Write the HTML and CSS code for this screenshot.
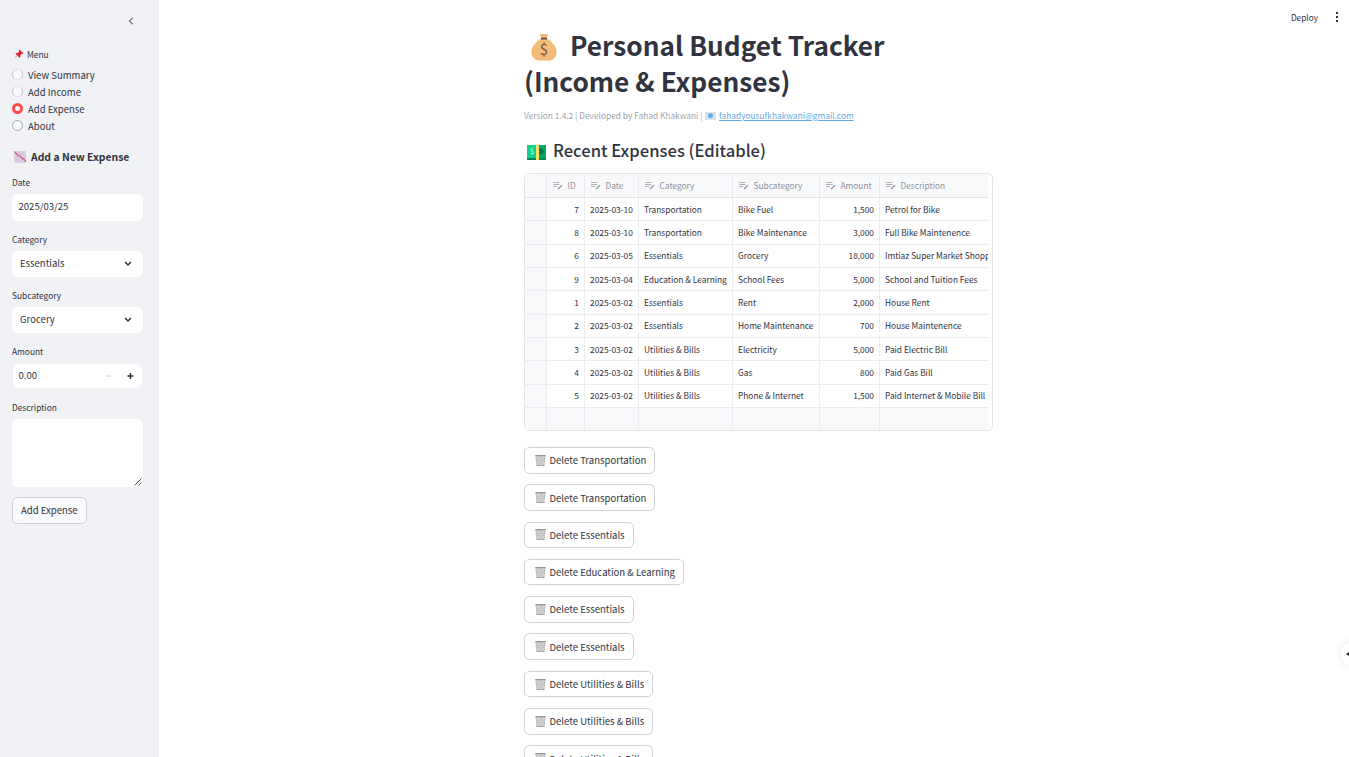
FILE: index.html
```html
<!DOCTYPE html>
<html lang="en">
<head>
<meta charset="utf-8">
<title>Personal Budget Tracker</title>
<link rel="stylesheet" href="styles.css">
</head>
<body>
<svg class="defs" aria-hidden="true">
  <symbol id="edit" viewBox="0 0 10 9"><path d="M0 1.500h6.500M0 3.500h6.500M0 5.500h4" stroke="#b0b2b8" stroke-width="1" fill="none"/><path d="M5 8 9 4.200" stroke="#999ba2" stroke-width="1.400" fill="none"/></symbol>
  <symbol id="bin" viewBox="0 0 11 11"><path d="M.7 1.500h9.600L9.400 10.800H1.600z" fill="#d2d2d2"/><path d="m1 3 7 7M4 2l5 5M10 3l-7 7M7 2 2 7M1 2l.9 8.500M10 2l-.9 8.500" stroke="#adadad" stroke-width=".5"/><path d="M.3 0h10.400v1.500H.3z" fill="#929594"/><path d="M1.600 10h7.800v1H1.600z" fill="#a4a6a5"/></symbol>
  <symbol id="down" viewBox="0 0 8 6"><path d="m1 1 3 3 3-3" fill="none" stroke="#31333f" stroke-width="1.500"/></symbol>
</svg>
<div class="app">
  <aside class="sidebar">
    <div class="collapse"><svg width="6" height="8" viewBox="0 0 6 8"><path d="M4.800.7 1.400 4l3.400 3.300" fill="none" stroke="#777986" stroke-width="1.200"/></svg></div>
    <div class="label menu"><svg width="10" height="10" viewBox="0 0 10 10"><path d="M3.300 6.300.6 9.200" stroke="#999" stroke-width=".7"/><path d="m5.400.4 4 3.800-.8.7-.7-.1-1.600 1.600.1 1.700-.8.7L1.400 4.800l.8-.8 1.500.1 1.500-1.500-.3-1.500z" fill="#e52233"/></svg><span>Menu</span></div>
    <div class="radios">
      <div class="radio"><i class="dot dim"></i><span>View Summary</span></div>
      <div class="radio"><i class="dot dim"></i><span>Add Income</span></div>
      <div class="radio"><i class="dot on"></i><span>Add Expense</span></div>
      <div class="radio"><i class="dot"></i><span>About</span></div>
    </div>
    <h3 class="subhead"><svg width="12" height="12" viewBox="0 0 12 12"><path d="M0 0h12v12H0z" fill="#ded4e8"/><path d="M3 0v12M6 0v12M9 0v12M0 3h12M0 6h12M0 9h12" stroke="#c9bdd8" stroke-width=".6"/><path d="m.3.5 4 4.200 2 .2 2 3 1.100-.5L12 11" fill="none" stroke="#df477c" stroke-width="1.100"/></svg><span>Add a New Expense</span></h3>
    <div class="field date"><div class="label">Date</div><div class="box"><span>2025/03/25</span></div></div>
    <div class="field"><div class="label">Category</div><div class="box select"><span>Essentials</span><svg width="8" height="6"><use href="#down"/></svg></div></div>
    <div class="field"><div class="label">Subcategory</div><div class="box select"><span>Grocery</span><svg width="8" height="6"><use href="#down"/></svg></div></div>
    <div class="field"><div class="label">Amount</div><div class="box number"><span>0.00</span><svg width="28" height="8" viewBox="0 0 28 8"><path d="M0 4h5.500" stroke="#cfd0d8" stroke-width="1"/><path d="M21.500 4h6M24.500 1v6" stroke="#31333f" stroke-width="1.400"/></svg></div></div>
    <div class="field"><div class="label">Description</div><div class="box area"><svg width="8" height="8" viewBox="0 0 8 8"><path d="m.5 7.500 7-7M4.500 7.500l3-3" stroke="#444" stroke-width=".9"/></svg></div></div>
    <div class="btn add"><span>Add Expense</span></div>
  </aside>
  <main class="main">
    <header class="toolbar"><span>Deploy</span><svg width="4" height="10" viewBox="0 0 4 10"><path d="M1 0h2v2H1zM1 4h2v2H1zM1 8h2v2H1z" fill="#31333f"/></svg></header>
    <div class="content">
      <h1 class="title"><svg width="26" height="27" viewBox="0 0 26 27"><path d="M8.500 0h9l-1.600 3.600h-5.800z" fill="#f2bd78"/><path d="M9.500 5C4 8.500.5 13 .5 18c0 5.500 3.500 8.500 7.500 8.500h10c4 0 7.500-3 7.500-8.500 0-5-3.500-9.500-9-13z" fill="#f2bd78"/><path d="M10 3.500h6v2h-6z" fill="#7b4a3a"/><text x="13" y="20.800" class="dollar">$</text></svg><span>Personal Budget Tracker</span><br><span>(Income &amp; Expenses)</span></h1>
      <div class="caption"><span>Version 1.4.2 | Developed by Fahad Khakwani |</span><svg width="11" height="8" viewBox="0 0 11 8"><path d="M0 0h11v8H0z" fill="#e3e4ec"/><path d="m0 0 5.500 4L11 0M0 8l4-4M11 8 7 4" stroke="#c4c9d8" fill="none" stroke-width=".6"/><circle cx="5.500" cy="3.700" r="2.600" fill="#70b9e8"/><circle cx="5.500" cy="3.700" r=".9" fill="#388fc8"/></svg><a class="mail">fahadyousufkhakwani@gmail.com</a></div>
      <h2 class="recent"><svg width="19" height="15" viewBox="0 0 19 15"><path d="M0 0h19v13l-1 2H1l-1-2z" fill="#00ad64"/><path d="M0 0h19v13H0z" fill="#0bd489"/><path d="M12 0h7v13h-7z" fill="#00a96a"/><circle cx="13.500" cy="6.500" r="3.300" fill="#07774c"/><path d="M0 13h19v2H0z" fill="#008b54"/><path d="M9 0h3v15H9z" fill="#ffe066"/><text x="5" y="9.300" class="cash">$</text></svg><span>Recent Expenses (Editable)</span></h2>
      <div class="table">
        <div class="row head"><div></div><div><svg><use href="#edit"/></svg><span>ID</span></div><div><svg><use href="#edit"/></svg><span>Date</span></div><div><svg><use href="#edit"/></svg><span>Category</span></div><div><svg><use href="#edit"/></svg><span>Subcategory</span></div><div><svg><use href="#edit"/></svg><span>Amount</span></div><div><svg><use href="#edit"/></svg><span>Description</span></div></div>
        <div class="row"><div></div><div>7</div><div>2025-03-10</div><div>Transportation</div><div>Bike Fuel</div><div>1,500</div><div>Petrol for Bike</div></div>
        <div class="row"><div></div><div>8</div><div>2025-03-10</div><div>Transportation</div><div>Bike Maintenance</div><div>3,000</div><div>Full Bike Maintenence</div></div>
        <div class="row"><div></div><div>6</div><div>2025-03-05</div><div>Essentials</div><div>Grocery</div><div>18,000</div><div>Imtiaz Super Market Shopp</div></div>
        <div class="row"><div></div><div>9</div><div>2025-03-04</div><div>Education &amp; Learning</div><div>School Fees</div><div>5,000</div><div>School and Tuition Fees</div></div>
        <div class="row"><div></div><div>1</div><div>2025-03-02</div><div>Essentials</div><div>Rent</div><div>2,000</div><div>House Rent</div></div>
        <div class="row"><div></div><div>2</div><div>2025-03-02</div><div>Essentials</div><div>Home Maintenance</div><div>700</div><div>House Maintenence</div></div>
        <div class="row"><div></div><div>3</div><div>2025-03-02</div><div>Utilities &amp; Bills</div><div>Electricity</div><div>5,000</div><div>Paid Electric Bill</div></div>
        <div class="row"><div></div><div>4</div><div>2025-03-02</div><div>Utilities &amp; Bills</div><div>Gas</div><div>800</div><div>Paid Gas Bill</div></div>
        <div class="row"><div></div><div>5</div><div>2025-03-02</div><div>Utilities &amp; Bills</div><div>Phone &amp; Internet</div><div>1,500</div><div>Paid Internet &amp; Mobile Bill</div></div>
        <div class="row blank"><div></div><div></div><div></div><div></div><div></div><div></div><div></div></div>
      </div>
      <div class="actions">
        <div class="btn"><svg><use href="#bin"/></svg><span>Delete Transportation</span></div>
        <div class="btn"><svg><use href="#bin"/></svg><span>Delete Transportation</span></div>
        <div class="btn"><svg><use href="#bin"/></svg><span>Delete Essentials</span></div>
        <div class="btn"><svg><use href="#bin"/></svg><span>Delete Education &amp; Learning</span></div>
        <div class="btn"><svg><use href="#bin"/></svg><span>Delete Essentials</span></div>
        <div class="btn"><svg><use href="#bin"/></svg><span>Delete Essentials</span></div>
        <div class="btn"><svg><use href="#bin"/></svg><span>Delete Utilities &amp; Bills</span></div>
        <div class="btn"><svg><use href="#bin"/></svg><span>Delete Utilities &amp; Bills</span></div>
        <div class="btn"><svg><use href="#bin"/></svg><span>Delete Utilities &amp; Bills</span></div>
      </div>
    </div>
  </main>
  <div class="float"><svg width="5" height="6" viewBox="0 0 5 6"><path d="m0 3 3-2v1.200h2v1.600H3V5z" fill="#222"/></svg></div>
</div>
</body>
</html>
```
FILE: styles.css
```css
* { box-sizing: border-box; }
body { margin: 0; background: #fff; color: #31333f; font: 9.550px/16px "Noto Sans CJK SC", "Noto Sans", sans-serif; white-space: nowrap; }
h1, h2, h3 { margin: 0; }
svg { display: block; flex: none; }
.defs { display: none; }
.app { position: relative; display: flex; width: 100vw; height: 757px; overflow: hidden; }

.sidebar { width: 159px; flex: none; padding: 16px 16px 0 12px; background: #f0f2f6; }
.collapse { height: 30px; padding: 1px 0 0 116px; }
.label { height: 16px; font-size: 8.400px; line-height: 16px; }
.menu { display: flex; align-items: center; gap: 3px; padding-left: 2px; }
.radios { margin-top: 4px; }
.radio { display: flex; align-items: center; gap: 5px; height: 17px; }
.dot { width: 11px; height: 11px; flex: none; border: 1px solid #a3a8b4; border-radius: 50%; background: #f9fafc; }
.dot.dim { border-color: #c5c7cf; border-top-color: #e0e2e8; border-bottom-color: #e0e2e8; }
.dot.on { border: 3.500px solid #ff4b4b; background: #fff; }
.subhead { display: flex; align-items: center; gap: 5px; height: 20px; margin-top: 13px; padding-left: 2px; font-size: 10.400px; font-weight: 600; line-height: 20px; }
.field { height: 56px; }
.date { height: 57px; margin-top: 7px; }
.box { display: flex; align-items: center; width: 131px; height: 26px; margin-top: 4px; padding: 0 6.500px 2px; border-radius: 5px; background: #fff; }
.date .box { height: 27px; padding-bottom: 3px; }
.box span { flex: 1; }
.select { padding: 0 11px 2px 8px; }
.select svg { margin-top: 2px; }
.number { width: 129px; height: 24px; margin: 5px 0 0 1px; padding: 0 8px 2px 5.500px; }
.number svg { margin-top: 1px; }
.area { height: 68px; justify-content: flex-end; align-items: flex-end; padding: 0 1px 1px; }
.btn { display: inline-flex; align-items: center; height: 26.670px; padding: 0 8px; border: 1px solid #d0d1d5; border-radius: 5.300px; background: #fff; }
.add { margin-top: 42px; background: #f9fafc; }

.main { flex: 1; }
.toolbar { display: flex; align-items: center; justify-content: flex-end; gap: 16.500px; height: 27px; padding: 6px 10.500px 0 0; }
.toolbar span { font-size: 8.300px; }
.content { width: 469px; margin-left: 365px; }
.title { height: 72px; font-size: 26.230px; font-weight: 700; line-height: 36px; }
.title svg { display: inline-block; margin: 0 13.500px 0 6.500px; vertical-align: -4.500px; }
.dollar { font: 15px "Noto Sans CJK SC", sans-serif; fill: #7b4a3a; text-anchor: middle; }
.caption { display: flex; align-items: center; height: 16px; margin-top: 8px; color: #a3a5ab; font-size: 8.350px; }
.caption svg { margin: 1px 3px 0 2.500px; }
.mail { color: #67a9df; text-decoration: underline; }
.recent { display: flex; align-items: center; gap: 7px; height: 28px; margin-top: 13px; padding-left: 3px; font-size: 16.600px; font-weight: 500; line-height: 28px; }
.recent svg { margin-top: 4px; }
.cash { font: 7px "Noto Sans CJK SC", sans-serif; fill: #fff; text-anchor: middle; }

.table { height: 258px; margin-top: 9px; padding-right: 4px; border: 1px solid #e3e4e8; border-radius: 5.300px; overflow: hidden; font-size: 8.350px; }
.row { display: grid; grid-template-columns: 22px 38px 54px 94px 87px 60px 108px; height: 23.330px; border-bottom: 1px solid #ebecef; }
.row > div { display: flex; align-items: center; padding: 0 5px 1px; border-right: 1px solid #ebecef; overflow: hidden; }
.row > div:first-child, .blank > div, .head > div { background: #f8f9fb; }
.row > div:last-child { border-right: 0; padding-right: 0; }
.row:not(.head) > div:nth-child(2), .row:not(.head) > div:nth-child(6) { justify-content: flex-end; }
.head { height: 24px; color: #90929b; border-color: #e3e4e8; }
.head > div { padding-left: 6px; }
.head svg { width: 10px; height: 9px; margin-right: 4.500px; }
.blank { border-bottom: 0; }

.actions { display: flex; flex-direction: column; align-items: flex-start; gap: 10.670px; margin-top: 15.900px; }
.actions .btn { flex: none; padding: 0 8px 0 9.500px; }
.actions svg { width: 11px; height: 11px; margin-right: 4px; }

.float { position: absolute; left: 1341px; top: 642px; display: flex; align-items: center; width: 24px; height: 24px; padding-left: 5px; border-radius: 50%; background: #fff; box-shadow: 0 0 10px rgba(0, 0, 0, .1); }
```
